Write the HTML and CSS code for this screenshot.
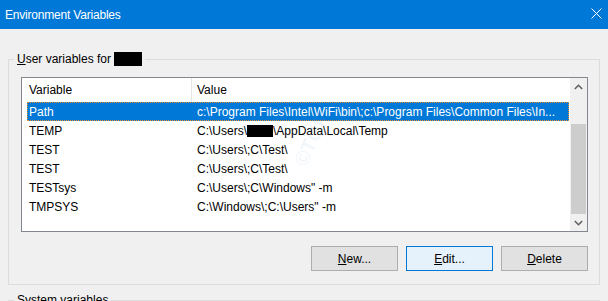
FILE: index.html
```html
<!DOCTYPE html>
<html lang="en">
  <head>
    <meta charset="UTF-8" />
    <title>Environment Variables</title>
    <link rel="stylesheet" href="styles.css">
  </head>
  <body>
    <div class="titlebar">
      <span class="title">Environment Variables</span>
      <svg class="close" width="11" height="11" viewBox="0 0 11 11">
        <path d="M0.5 0.5 L10.5 10.5 M10.5 0.5 L0.5 10.5" stroke="#fff" stroke-width="1" fill="none" />
      </svg>
    </div>

    <fieldset class="group">
      <legend><u>U</u>ser variables for <span class="redact"></span></legend>

      <div class="listview">
        <div class="list">
          <div class="header">
            <div class="hcell first">Variable</div>
            <div class="hcell">Value</div>
          </div>
          <div class="row selected">
            <div class="cell name">Path</div>
            <div class="cell">c:\Program Files\Intel\WiFi\bin\;c:\Program Files\Common Files\In...</div>
          </div>
          <div class="row">
            <div class="cell name">TEMP</div>
            <div class="cell">C:\Users\<span class="redact small"></span>\AppData\Local\Temp</div>
          </div>
          <div class="row">
            <div class="cell name">TEST</div>
            <div class="cell">C:\Users\;C\Test\</div>
          </div>
          <div class="row">
            <div class="cell name">TEST</div>
            <div class="cell">C:\Users\;C\Test\</div>
          </div>
          <div class="row">
            <div class="cell name">TESTsys</div>
            <div class="cell">C:\Users\;C\Windows" -m</div>
          </div>
          <div class="row">
            <div class="cell name">TMPSYS</div>
            <div class="cell">C:\Windows\;C:\Users" -m</div>
          </div>
          <span class="watermark">&copy;TGP</span>
        </div>
        <div class="scrollbar">
          <div class="arrow">
            <svg width="9" height="6" viewBox="0 0 9 6"><path d="M0.8 5 L4.5 1.3 L8.2 5" stroke="#606060" stroke-width="1.6" fill="none" /></svg>
          </div>
          <div class="track">
            <div class="thumb"></div>
          </div>
          <div class="arrow">
            <svg width="9" height="6" viewBox="0 0 9 6"><path d="M0.8 1 L4.5 4.7 L8.2 1" stroke="#606060" stroke-width="1.6" fill="none" /></svg>
          </div>
        </div>
      </div>

      <div class="buttons">
        <button class="btn"><u>N</u>ew...</button>
        <button class="btn default"><u>E</u>dit...</button>
        <button class="btn"><u>D</u>elete</button>
      </div>
    </fieldset>

    <fieldset class="group second">
      <legend><u>S</u>ystem variables</legend>
    </fieldset>
  </body>
</html>
```

FILE: styles.css
```css
body {
  margin: 0;
  background: #f0f0f0;
  font-family: "Liberation Sans", Arial, sans-serif;
  font-size: 12px;
  color: #000;
  overflow: hidden;
  height: 301px;
}

.titlebar {
  height: 29px;
  background: #0078d7;
  color: #fff;
  display: flex;
  align-items: center;
  justify-content: space-between;
  padding: 0 6px 0 5px;
}

.title {
  letter-spacing: -0.2px;
}

.close {
  margin-top: -3px;
}

.group {
  margin: 22px 8px 0 8px;
  padding: 10px 11px 13px 12px;
  border: 1px solid #dcdcdc;
  min-width: 0;
}

.group legend {
  padding: 0 3px;
  margin-left: -7px;
  line-height: 16px;
  height: 16px;
}

.group.second {
  margin-top: 7px;
  height: 40px;
}

.redact {
  display: inline-block;
  width: 28px;
  height: 14px;
  background: #000;
  vertical-align: -3px;
}

.redact.small {
  width: 26px;
  height: 12px;
  vertical-align: -2px;
}

.listview {
  height: 153px;
  border: 1px solid #828790;
  background: #fff;
  display: flex;
}

.list {
  flex: 1;
  position: relative;
  overflow: hidden;
  padding: 0 1px 0 5px;
}

.header {
  display: grid;
  grid-template-columns: 170px 1fr;
  height: 24px;
  margin-left: -5px;
  align-items: center;
}

.hcell {
  padding-left: 7px;
  line-height: 24px;
}

.hcell.first {
  border-right: 1px solid #e5e5e5;
}

.hcell + .hcell {
  padding-left: 5px;
}

.row {
  display: grid;
  grid-template-columns: 168px 1fr;
  height: 19px;
  line-height: 19px;
  border: 1px solid transparent;
  box-sizing: border-box;
  white-space: nowrap;
}

.cell {
  padding-left: 1px;
  overflow: hidden;
}

.row.selected {
  background: #0078d7;
  color: #fff;
  border: 1px dotted #e8902a;
}

.watermark {
  position: absolute;
  left: 262px;
  top: 50px;
  transform: rotate(-65deg);
  color: rgba(120, 160, 210, 0.1);
  font-size: 20px;
  font-weight: bold;
}

.scrollbar {
  width: 17px;
  background: #f0f0f0;
  display: flex;
  flex-direction: column;
}

.arrow {
  height: 17px;
  display: flex;
  align-items: center;
  justify-content: center;
}

.track {
  flex: 1;
  padding: 29px 1px 0 1px;
}

.thumb {
  height: 90px;
  background: #cdcdcd;
}

.buttons {
  display: flex;
  justify-content: flex-end;
  gap: 8px;
  margin-top: 14px;
}

.btn {
  width: 87px;
  height: 25px;
  background: #e1e1e1;
  border: 1px solid #adadad;
  font-family: inherit;
  font-size: 12px;
  color: #000;
  padding: 0;
}

.btn.default {
  background: #e5f1fb;
  border-color: #0078d7;
}
```
